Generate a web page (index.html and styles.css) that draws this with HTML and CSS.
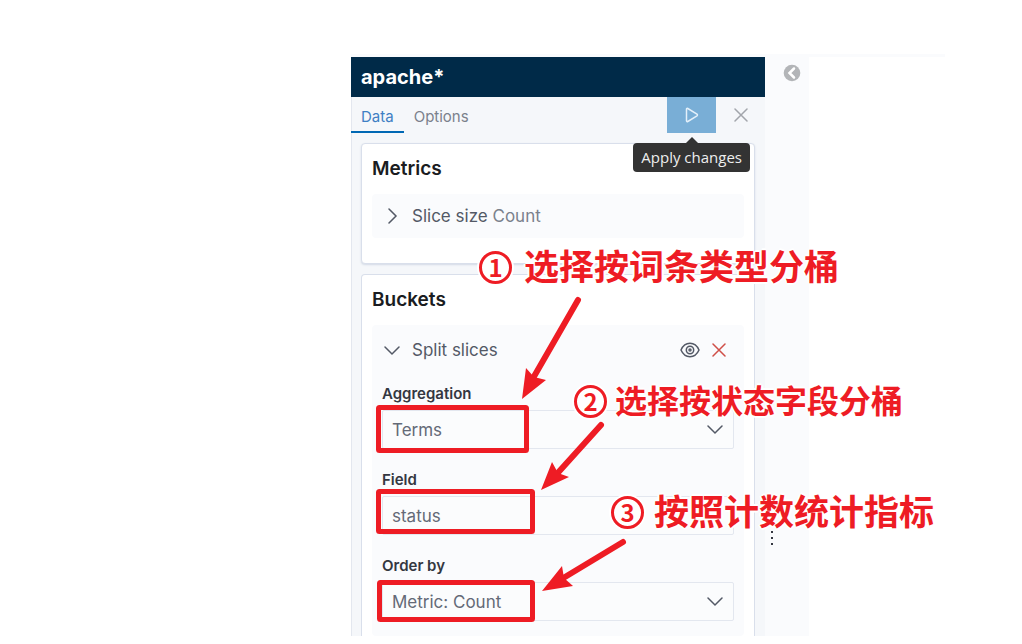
FILE: index.html
```
<!DOCTYPE html>
<html lang="zh-CN">
<head>
  <meta charset="UTF-8">
  <meta name="viewport" content="width=device-width, initial-scale=1.0">
  <title>apache*</title>
  <link rel="stylesheet" href="styles.css">
</head>
<body>
  <main class="workspace">
    <div class="top-line"></div>

    <section class="editor">
      <h1 class="editor-title">apache*</h1>

      <!-- Tabs -->
      <nav class="tabs">
        <button class="tab active">Data</button>
        <button class="tab">Options</button>
        <div class="actions">
          <button class="apply" aria-label="Apply changes" aria-describedby="apply-tip">
            <svg width="16" height="16" viewBox="0 0 16 16"><path d="M2.5 2.2v11.6c0 .7.7 1 1.3.7l9.2-5.7c.6-.4.6-1.200 0-1.600L3.800 1.500c-.6-.3-1.300 0-1.300.7z"/></svg>
          </button>
          <button class="discard" aria-label="Discard changes">
            <svg width="14" height="14" viewBox="0 0 14 14"><path d="M1 1l12 12M13 1L1 13"/></svg>
          </button>
          <span class="tooltip" id="apply-tip" role="tooltip">Apply changes</span>
        </div>
      </nav>

      <div class="cards">
        <!-- Metrics -->
        <div class="card">
          <h2>Metrics</h2>
          <div class="agg">
            <div class="agg-head">
              <button class="toggle">
                <svg width="16" height="16" viewBox="0 0 16 16"><path d="M5 1l7 7-7 7"/></svg>
                <span>Slice size <span class="muted">Count</span></span>
              </button>
            </div>
          </div>
        </div>

        <!-- Buckets -->
        <div class="card card-open">
          <h2>Buckets</h2>
          <div class="agg">
            <div class="agg-head open">
              <button class="toggle">
                <svg width="16" height="16" viewBox="0 0 16 16"><path d="M1 5l7 7 7-7"/></svg>
                <span>Split slices</span>
              </button>
              <button class="icon" aria-label="Disable aggregation">
                <svg width="20" height="16" viewBox="0 0 20 16"><path d="M1 8c2-4.500 5.500-6.700 9-6.700S17 3.500 19 8c-2 4.500-5.500 6.700-9 6.700S3 12.500 1 8z"/><circle cx="10" cy="8" r="3.700"/><circle cx="10" cy="8" r="1"/></svg>
              </button>
              <button class="icon remove" aria-label="Remove aggregation">
                <svg width="14" height="14" viewBox="0 0 14 14"><path d="M1 1l12 12M13 1L1 13"/></svg>
              </button>
            </div>
            <form class="fields">
              <div class="field">
                <label for="aggregation">Aggregation</label>
                <div class="control">
                  <select id="aggregation"><option>Terms</option></select>
                  <svg width="16" height="16" viewBox="0 0 16 16"><path d="M1 4l7 7 7-7"/></svg>
                </div>
              </div>
              <div class="field">
                <label for="field">Field</label>
                <div class="control">
                  <input type="text" id="field" value="status">
                </div>
              </div>
              <div class="field">
                <label for="order">Order by</label>
                <div class="control">
                  <select id="order"><option>Metric: Count</option></select>
                  <svg width="16" height="16" viewBox="0 0 16 16"><path d="M1 4l7 7 7-7"/></svg>
                </div>
              </div>
            </form>
          </div>
        </div>
      </div>

      <!-- Notes drawn over the editor -->
      <svg class="marks" width="600" height="580" viewBox="351 57 600 580">
        <g class="frames">
          <rect x="378.500" y="407.500" width="148" height="43" rx="1"/>
          <rect x="378.500" y="491.500" width="154" height="40" rx="1"/>
          <rect x="379.500" y="582.500" width="153" height="37" rx="1"/>
        </g>
        <g class="arrows">
          <path d="M578 300L532 380"/>
          <path d="M601 425L555 476"/>
          <path d="M623 542L560 580"/>
        </g>
        <g class="heads">
          <path d="M522 399l4-31 8 9 12 3z"/>
          <path d="M541 490l11-28 6 11 11 4z"/>
          <path d="M542 591l20-25 2 12 9 8z"/>
        </g>
      </svg>
      <p class="note note-1"><span class="num">1</span>选择按词条类型分桶</p>
      <p class="note note-2"><span class="num">2</span>选择按状态字段分桶</p>
      <p class="note note-3"><span class="num">3</span>按照计数统计指标</p>
    </section>

    <aside class="gutter">
      <button class="collapse" aria-label="Collapse editor">
        <svg width="18" height="18" viewBox="0 0 18 18"><circle cx="9" cy="9" r="8.300"/><path d="M11 4.500L6.500 9l4.500 4.500"/></svg>
      </button>
      <button class="resizer" aria-label="Resize editor">
        <svg width="4" height="16" viewBox="0 0 4 16"><path d="M1 1h2v2H1zM1 7h2v2H1zM1 13h2v2H1z"/></svg>
      </button>
    </aside>
  </main>
</body>
</html>
```
FILE: styles.css
```
* {
  box-sizing: border-box;
}

body {
  margin: 0;
  background-color: #fff;
  color: #343741;
  font-family: Inter, sans-serif;
  font-size: 17px;
}

h1,
h2,
p {
  margin: 0;
}

button {
  display: flex;
  align-items: center;
  padding: 0;
  border: none;
  background: none;
  font: inherit;
  color: inherit;
  cursor: pointer;
}

svg {
  flex: none;
  fill: none;
  stroke: #535966;
  stroke-width: 1.5;
  stroke-linecap: round;
}

.workspace {
  display: grid;
  grid-template-columns: 351fr 414fr 44px 213fr;
  padding-top: 54px;
  overflow: hidden;
}

.top-line {
  grid-column: 2 / -1;
  height: 3px;
  margin-right: 77px;
  background-color: #fafbfd;
}

.editor {
  grid-column: 2;
  position: relative;
  background-color: #f5f7fa;
  box-shadow: inset 1px 0 #e3e7ef;
}

.editor-title {
  padding: 0 10px;
  background-color: #002a48;
  color: #fff;
  font-size: 20px;
  font-weight: 700;
  line-height: 40px;
}

/* Tabs */
.tabs {
  display: flex;
  height: 36px;
  font-size: 15px;
}

.tab {
  padding: 2px 10px 0;
  color: #7b818c;
}

.tab.active {
  color: #3f7fc4;
  box-shadow: inset 0 -2px #0068b4;
}

.actions {
  position: relative;
  display: flex;
  margin-left: auto;
}

.apply,
.discard {
  justify-content: center;
  width: 49px;
}

.apply {
  background-color: #79aed6;
}

.apply svg {
  stroke: #e4f0fa;
}

.discard svg {
  stroke: #a2a5ab;
}

.tooltip {
  position: absolute;
  top: 46px;
  right: 15px;
  z-index: 2;
  padding: 0 8px;
  border-radius: 4px;
  background-color: #333;
  color: #eee;
  font-family: "Open Sans", sans-serif;
  font-size: 15px;
  line-height: 29px;
  white-space: nowrap;
}

.tooltip::before {
  content: "";
  position: absolute;
  top: -6px;
  left: 50%;
  margin-left: -6px;
  border: 6px solid transparent;
  border-top: none;
  border-bottom-color: #333;
}

/* Cards */
.cards {
  display: flex;
  flex-direction: column;
  gap: 10px;
  padding: 10px 10px 0;
}

.card {
  padding: 13px 10px 25px;
  border: 1px solid #d9dfeb;
  border-radius: 4px;
  background-color: #fff;
  box-shadow: 0 1px 2px #d3dae6;
}

.card-open {
  padding-bottom: 0;
  border-bottom: none;
  border-radius: 4px 4px 0 0;
  box-shadow: none;
}

.card h2 {
  margin-bottom: 13px;
  color: #1a1c21;
  font-size: 19px;
  font-weight: 600;
  line-height: 24px;
}

.agg {
  padding: 0 10px;
  border-radius: 4px;
  background-color: #fafbfd;
}

.agg-head {
  display: flex;
  align-items: center;
  gap: 12px;
  height: 44px;
}

.agg-head.open {
  height: 49px;
  padding-right: 8px;
}

.toggle {
  flex: 1;
  gap: 12px;
  padding-left: 2px;
  color: #535966;
}

.muted {
  color: #7b818c;
}

.remove svg {
  stroke: #cf4f48;
}

.fields {
  display: flex;
  flex-direction: column;
  gap: 21px;
  padding: 10px 0 15px;
}

.field {
  display: flex;
  flex-direction: column;
  gap: 6px;
}

.field label {
  font-size: 15px;
  font-weight: 600;
  line-height: 20px;
}

.control {
  display: grid;
  align-items: center;
}

.control > * {
  grid-area: 1 / 1;
}

.control svg {
  justify-self: end;
  margin-right: 11px;
  pointer-events: none;
}

.control select,
.control input {
  appearance: none;
  width: 100%;
  height: 39px;
  padding: 1px 9px 0;
  border: 1px solid #e3e7ef;
  border-radius: 2px;
  background-color: #fbfcfd;
  color: #646a77;
  font: inherit;
}

/* Gutter */
.gutter {
  display: flex;
  flex-direction: column;
  align-items: flex-start;
  background-color: #fafbfd;
}

.collapse {
  margin: 7px 0 0 18px;
}

.collapse svg {
  fill: #b3b5b8;
  stroke: none;
}

.collapse path {
  fill: none;
  stroke: #fff;
  stroke-width: 2.5;
}

.resizer {
  margin: auto 0 90px 5px;
}

.resizer svg {
  fill: #343741;
  stroke: none;
}

/* Notes */
.marks {
  position: absolute;
  top: 0;
  left: 0;
  z-index: 3;
  pointer-events: none;
}

.frames {
  stroke: #ee1c24;
  stroke-width: 5;
}

.arrows {
  stroke: #ee1c24;
  stroke-width: 6;
}

.heads {
  fill: #ee1c24;
  stroke: none;
}

.note {
  position: absolute;
  z-index: 4;
  display: flex;
  align-items: center;
  gap: 12px;
  color: #ee1c24;
  font-family: "Noto Sans CJK SC", sans-serif;
  font-size: 35px;
  font-weight: 700;
  line-height: 40px;
  white-space: nowrap;
  text-shadow: 2px 0 #fff, -2px 0 #fff, 0 2px #fff, 0 -2px #fff, 0 0 3px #fff;
}

.num {
  width: 33px;
  height: 33px;
  margin-top: 4px;
  border: 3px solid;
  border-radius: 50%;
  background-color: #fff;
  box-shadow: 0 0 0 2px #fff;
  font-size: 24px;
  line-height: 26px;
  text-align: center;
}

.note-1 {
  top: 188px;
  left: 128px;
}

.note-2 {
  top: 322px;
  left: 223px;
  gap: 8px;
  font-size: 32px;
}

.note-3 {
  top: 433px;
  left: 260px;
  gap: 10px;
}
```
